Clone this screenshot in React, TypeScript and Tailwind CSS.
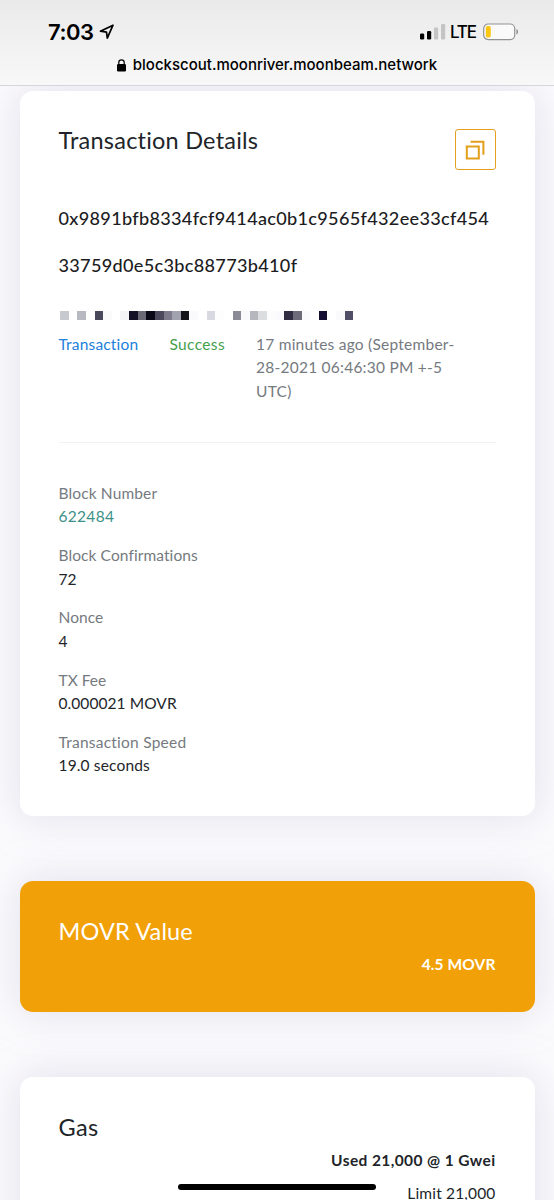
import type { ReactNode } from "react";

const cells = [
  "#c8c8cf", "#fff", "#b9b9c1", "#fff", "#4a485b", "#fafafb", "#fff", "#f4f4f6", "#151228",
  "#6b6976", "#0a0716", "#4b495b", "#7d7b8b", "#a3a2b0", "#15141b", "#fafafc", "#fff", "#d8d8e0",
  "#fdfdfe", "#fff", "#8b8a97", "#fafafc", "#b6b6be", "#dcdde0", "#fcfcfd", "#fafafc", "#302d42",
  "#6d6b7a", "#fafafc", "#fff", "#151033", "#fff", "#fafafc", "#514e68",
];

const details = [
  { label: "Block Number", value: "622484", labelClass: "tracking-[0.13px]", valueClass: "text-[#3d9188] tracking-[0.3px]" },
  { label: "Block Confirmations", value: "72", labelClass: "tracking-[0.09px]", valueClass: "text-[#212529]" },
  { label: "Nonce", value: "4", labelClass: "tracking-[0.05px]", valueClass: "text-[#212529]" },
  { label: "TX Fee", value: "0.000021 MOVR", labelClass: "tracking-[0px]", valueClass: "text-[#212529] tracking-[0.07px]" },
  { label: "Transaction Speed", value: "19.0 seconds", labelClass: "tracking-[0.24px]", valueClass: "text-[#212529] tracking-[0.15px]" },
];

function Card({ className, children }: { className: string; children: ReactNode }) {
  return (
    <section className={`rounded-[13px] px-[39px] shadow-[0_0_39px_rgba(202,199,226,0.5)] ${className}`}>
      {children}
    </section>
  );
}

function StatusBar() {
  return (
    <header className="relative z-10 h-[86px] shrink-0 border-b border-[#d5d5dc] bg-linear-to-b from-[#eaeaea] to-[#f8f8f8] font-['Inter',sans-serif] text-black">
      <div className="flex h-[54px] items-center justify-between pt-[9px] pr-[35px] pl-12">
        <div className="flex items-center gap-[6px]">
          <span className="text-[22px] leading-7 font-semibold tracking-[-0.5px]">7:03</span>
          <svg width="16" height="16" viewBox="0 0 16 16" fill="none" stroke="black" strokeWidth="1.7" strokeLinejoin="round">
            <path d="M14 1.2 1.4 7.2l6.1.9.8 6.1z" />
          </svg>
        </div>
        <div className="flex items-center">
          <svg width="27" height="18" viewBox="0 0 27 18">
            <rect x="1" y="10.5" width="4.2" height="6" rx="1.3" />
            <rect x="8" y="8" width="4.2" height="8.5" rx="1.3" />
            <rect x="15" y="4.5" width="4.2" height="12" rx="1.3" fill="#c4c4c4" />
            <rect x="22" y="1" width="4.2" height="15.5" rx="1.3" fill="#c4c4c4" />
          </svg>
          <span className="ml-[4px] text-[17px] leading-6 font-medium tracking-[-1.1px]">LTE</span>
          <svg className="ml-[7px]" width="36" height="18" viewBox="0 0 36 18">
            <rect x=".7" y="1" width="31" height="15.6" rx="4.5" fill="#fafafa" stroke="#929292" strokeWidth="1.2" />
            <rect x="2.8" y="3" width="5" height="11.6" rx="1.8" fill="#fbc614" />
            <path d="M33.4 6v5.6c2.2-.6 2.2-5 0-5.6z" fill="#8d8d8d" />
          </svg>
        </div>
      </div>
      <div className="flex h-[22px] items-center justify-center gap-[7px]">
        <svg width="9" height="13" viewBox="0 0 9 13">
          <rect y="5" width="9" height="7.5" rx="1.3" />
          <path d="M1.8 6V3.6a2.7 2.7 0 0 1 5.4 0V6" fill="none" stroke="black" strokeWidth="1.2" />
        </svg>
        <span className="text-[15px] leading-5 font-medium tracking-[0px]">blockscout.moonriver.moonbeam.network</span>
      </div>
    </header>
  );
}

export default function App() {
  return (
    <div className="relative flex h-[1200px] w-[554px] flex-col overflow-hidden bg-[#fbfafc] font-['Lato',sans-serif] text-[15.5px] leading-[23.3px] text-[#212529]">
      <StatusBar />
      <main className="flex flex-col gap-[65px] px-[19.5px] pt-[5px]">
        <Card className="h-[725px] shrink-0 bg-white pt-[38px]">
          <div className="flex h-[41px] items-start justify-between">
            <h1 className="-mt-px text-[23.5px] leading-6 tracking-[0.22px]">Transaction Details</h1>
            <button className="flex size-[41px] items-center justify-center rounded-[3px] border border-[#e6a021]" aria-label="Copy">
              <svg width="20" height="20" viewBox="0 0 20 20" fill="none" stroke="#e39f1c" strokeWidth="2">
                <path d="M1.8 6.4h12v12h-12z" />
                <path d="M5.6 1.8h12.8v13" />
              </svg>
            </button>
          </div>
          <p className="mt-[25px] text-[18.1px] leading-[46.6px] font-medium whitespace-nowrap text-[#1c1c22]">
            <span className="block tracking-[0.31px]">0x9891bfb8334fcf9414ac0b1c9565f432ee33cf454</span>
            <span className="block tracking-[0.31px]">33759d0e5c3bc88773b410f</span>
          </p>
          <div className="mt-[23px] ml-[1.5px] flex">
            {cells.map((color, index) => (
              <span key={index} className="h-[9px] w-[8.64px]" style={{ backgroundColor: color }} />
            ))}
          </div>
          <div className="mt-[13px] flex whitespace-nowrap">
            <span className="w-[111px] tracking-[0.17px] text-[#2080dc]">Transaction</span>
            <span className="w-[86.5px] tracking-[0.35px] text-[#45a04d]">Success</span>
            <span className="tracking-[0.24px] text-[#757a80]">
              17 minutes ago (September-
              <br />
              28-2021 06:46:30 PM +-5
              <br />
              UTC)
            </span>
          </div>
          <hr className="mt-[39px] border-[#f1f1f2]" />
          <dl className="mt-[39px] flex flex-col gap-[15.6px]">
            {details.map(({ label, value, labelClass, valueClass }) => (
              <div key={label}>
                <dt className={`text-[#757a80] ${labelClass}`}>{label}</dt>
                <dd className={valueClass}>{value}</dd>
              </div>
            ))}
          </dl>
        </Card>
        <Card className="h-[131px] shrink-0 bg-[#f2a007] pt-[38px] text-white">
          <h2 className="text-[23.5px] leading-6 tracking-[0.15px]">MOVR Value</h2>
          <p className="mt-[10px] text-right font-bold tracking-[0.1px]">4.5 MOVR</p>
        </Card>
        <Card className="h-[200px] shrink-0 bg-white pt-[38px]">
          <h2 className="text-[23.5px] leading-6 tracking-[0.4px]">Gas</h2>
          <p className="mt-[10px] text-right font-bold tracking-[0.4px]">Used 21,000 @ 1 Gwei</p>
          <p className="mt-[10px] text-right tracking-[0.17px]">Limit 21,000</p>
        </Card>
      </main>
      <div className="absolute bottom-[10px] left-[178px] h-[6px] w-[198px] rounded-full bg-black" />
    </div>
  );
}
